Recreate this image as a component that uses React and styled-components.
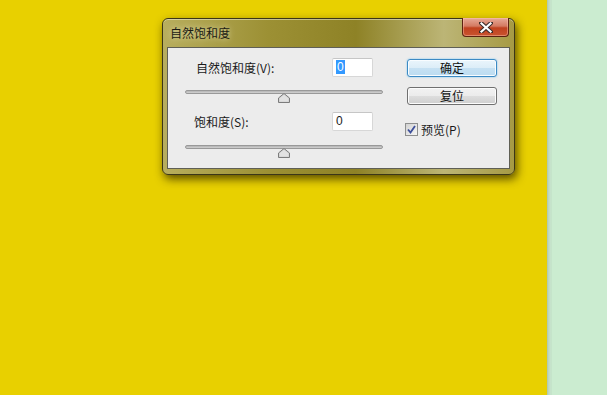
import styled, { createGlobalStyle } from 'styled-components';

const GlobalStyle = createGlobalStyle`
  html, body {
    margin: 0;
    padding: 0;
  }
  body {
    font-family: "Noto Sans CJK SC", "Liberation Sans", sans-serif;
    font-size: 12px;
    color: #1a1a1a;
  }
`;

const Screen = styled.div`
  display: flex;
  width: 607px;
  height: 395px;
  overflow: hidden;
`;

const Workspace = styled.div`
  flex: 1;
  background: #e8d000;
  padding: 18px 0 0 162px;
`;

const SidePanel = styled.div`
  width: 60px;
  background: linear-gradient(to right, #9fb9a3 0, #c2dcc6 1px, #b5d2ba 2px, #cde9d2 3px, #bfdcc4 4px, #cbecd0 5px, #cbecd0 100%);
`;

const Window = styled.div`
  width: 353px;
  height: 157px;
  box-sizing: border-box;
  border: 1px solid #3b3618;
  border-radius: 6px;
  padding: 0 4px 5px 4px;
  display: flex;
  flex-direction: column;
  background: linear-gradient(to right, #b8ae5e 0%, #9c9034 30%, #8e8226 55%, #bcb576 80%, #a69a44 100%);
  box-shadow: 2px 4px 10px rgba(40, 30, 0, 0.75), inset 0 1px 0 rgba(255, 255, 240, 0.45);
`;

const TitleBar = styled.div`
  height: 28px;
  display: flex;
  align-items: flex-start;
  justify-content: space-between;
`;

const Title = styled.span`
  margin: 5px 0 0 3px;
  font-size: 12px;
  color: #1c1c14;
  text-shadow: 0 0 6px rgba(255, 255, 230, 0.7);
`;

const CloseButton = styled.div`
  width: 47px;
  height: 19px;
  margin: -1px 1px 0 0;
  box-sizing: border-box;
  border: 1px solid #5b2110;
  border-top: none;
  border-radius: 0 0 4px 4px;
  background: linear-gradient(to bottom, #e7aa98 0%, #d47a62 45%, #c0411f 55%, #c9532f 100%);
  box-shadow: inset 0 0 0 1px rgba(255, 200, 180, 0.45);
  display: flex;
  align-items: center;
  justify-content: center;
`;

const Panel = styled.div`
  flex: 1;
  border: 1px solid #5f5f55;
  background: #ececec;
  display: flex;
  padding-top: 10px;
`;

const Controls = styled.div`
  width: 198px;
  padding-left: 17px;
  display: flex;
  flex-direction: column;
`;

const FieldRow = styled.div`
  height: 19px;
  display: flex;
  align-items: center;
  justify-content: space-between;
  padding: 0 10px 0 ${(p) => p.indent}px;
  margin-top: ${(p) => p.gap}px;
`;

const Label = styled.span`
  font-size: 12px;
  line-height: 19px;
`;

const NumberBox = styled.div`
  width: 41px;
  height: 19px;
  box-sizing: border-box;
  border: 1px solid #d7d7d7;
  border-top-color: #c6c6c6;
  border-radius: 2px;
  background: #ffffff;
  padding: 1px 0 0 3px;
  font-family: "Liberation Sans", sans-serif;
  font-size: 12px;
  line-height: 15px;
`;

const Selected = styled.span`
  background: #3399ff;
  color: #ffffff;
  padding: 0 1px;
`;

const Slider = styled.div`
  position: relative;
  width: 198px;
  height: 12px;
  margin-top: ${(p) => p.gap}px;
`;

const Track = styled.div`
  height: 4px;
  box-sizing: border-box;
  border: 1px solid #999999;
  border-radius: 2px;
  background: linear-gradient(to bottom, #b3b3b3, #d2d2d2);
`;

const Thumb = styled.svg`
  position: absolute;
  left: 93px;
  top: 3px;
`;

const Actions = styled.div`
  margin-left: 24px;
  display: flex;
  flex-direction: column;
  padding-top: 1px;
`;

const Button = styled.div`
  width: 90px;
  height: 18px;
  box-sizing: border-box;
  border: 1px solid ${(p) => (p.focused ? '#3c8ac4' : '#707070')};
  border-radius: 3px;
  margin-bottom: 10px;
  background: ${(p) =>
    p.focused
      ? 'linear-gradient(to bottom, #eaf5fc 0%, #dcedf8 50%, #c6e1f3 51%, #bcdcf1 100%)'
      : 'linear-gradient(to bottom, #f2f2f2 0%, #ebebeb 50%, #dddddd 51%, #cfcfcf 100%)'};
  box-shadow: ${(p) => (p.focused ? '0 0 2px #6fc0ef, inset 0 0 0 1px #f8fcff' : 'inset 0 0 0 1px #fcfcfc')};
  text-align: center;
  font-size: 12px;
  line-height: 16px;
  color: #111;
`;

const CheckRow = styled.label`
  display: flex;
  align-items: center;
  gap: 3px;
  margin: 6px 0 0 -2px;
  font-size: 12px;
`;

const Box = styled.span`
  width: 11px;
  height: 11px;
  border: 1px solid #8e8f8f;
  background: linear-gradient(135deg, #d2d2d2, #f6f6f6);
  display: flex;
  align-items: center;
  justify-content: center;
`;

const Field = ({ label, value, selected, indent, gap }) => (
  <FieldRow indent={indent} gap={gap}>
    <Label>{label}</Label>
    <NumberBox>{selected ? <Selected>{value}</Selected> : value}</NumberBox>
  </FieldRow>
);

const SliderBar = ({ gap }) => (
  <Slider gap={gap}>
    <Track />
    <Thumb width="12" height="10" viewBox="0 0 12 10">
      <path d="M6 0.5 L11.5 5 L11.5 9.5 L0.5 9.5 L0.5 5 Z" fill="#d0d0d0" stroke="#7c7c7c" />
      <path d="M6 1.8 L10.4 5.4 L10.4 8.4 L1.6 8.4 L1.6 5.4 Z" fill="#e2e2e2" />
    </Thumb>
  </Slider>
);

const App = () => (
  <>
    <GlobalStyle />
    <Screen>
      <Workspace>
        <Window>
          <TitleBar>
            <Title>自然饱和度</Title>
            <CloseButton>
              <svg width="14" height="11" viewBox="0 0 14 11">
                <path d="M2 1 L12 10 M12 1 L2 10" stroke="#3a2a28" strokeWidth="4.2" strokeLinecap="round" />
                <path d="M2.5 1.5 L11.5 9.5 M11.5 1.5 L2.5 9.5" stroke="#ffffff" strokeWidth="2.2" strokeLinecap="square" />
              </svg>
            </CloseButton>
          </TitleBar>
          <Panel>
            <Controls>
              <Field label="自然饱和度(V):" value="0" selected indent={11} gap={0} />
              <SliderBar gap={13} />
              <Field label="饱和度(S):" value="0" indent={9} gap={10} />
              <SliderBar gap={14} />
            </Controls>
            <Actions>
              <Button focused>确定</Button>
              <Button>复位</Button>
              <CheckRow>
                <Box>
                  <svg width="9" height="9" viewBox="0 0 9 9">
                    <path d="M1 4.5 L3.5 7.5 L8 1" fill="none" stroke="#3d4f9a" strokeWidth="1.8" />
                  </svg>
                </Box>
                预览(P)
              </CheckRow>
            </Actions>
          </Panel>
        </Window>
      </Workspace>
      <SidePanel />
    </Screen>
  </>
);

export default App;
